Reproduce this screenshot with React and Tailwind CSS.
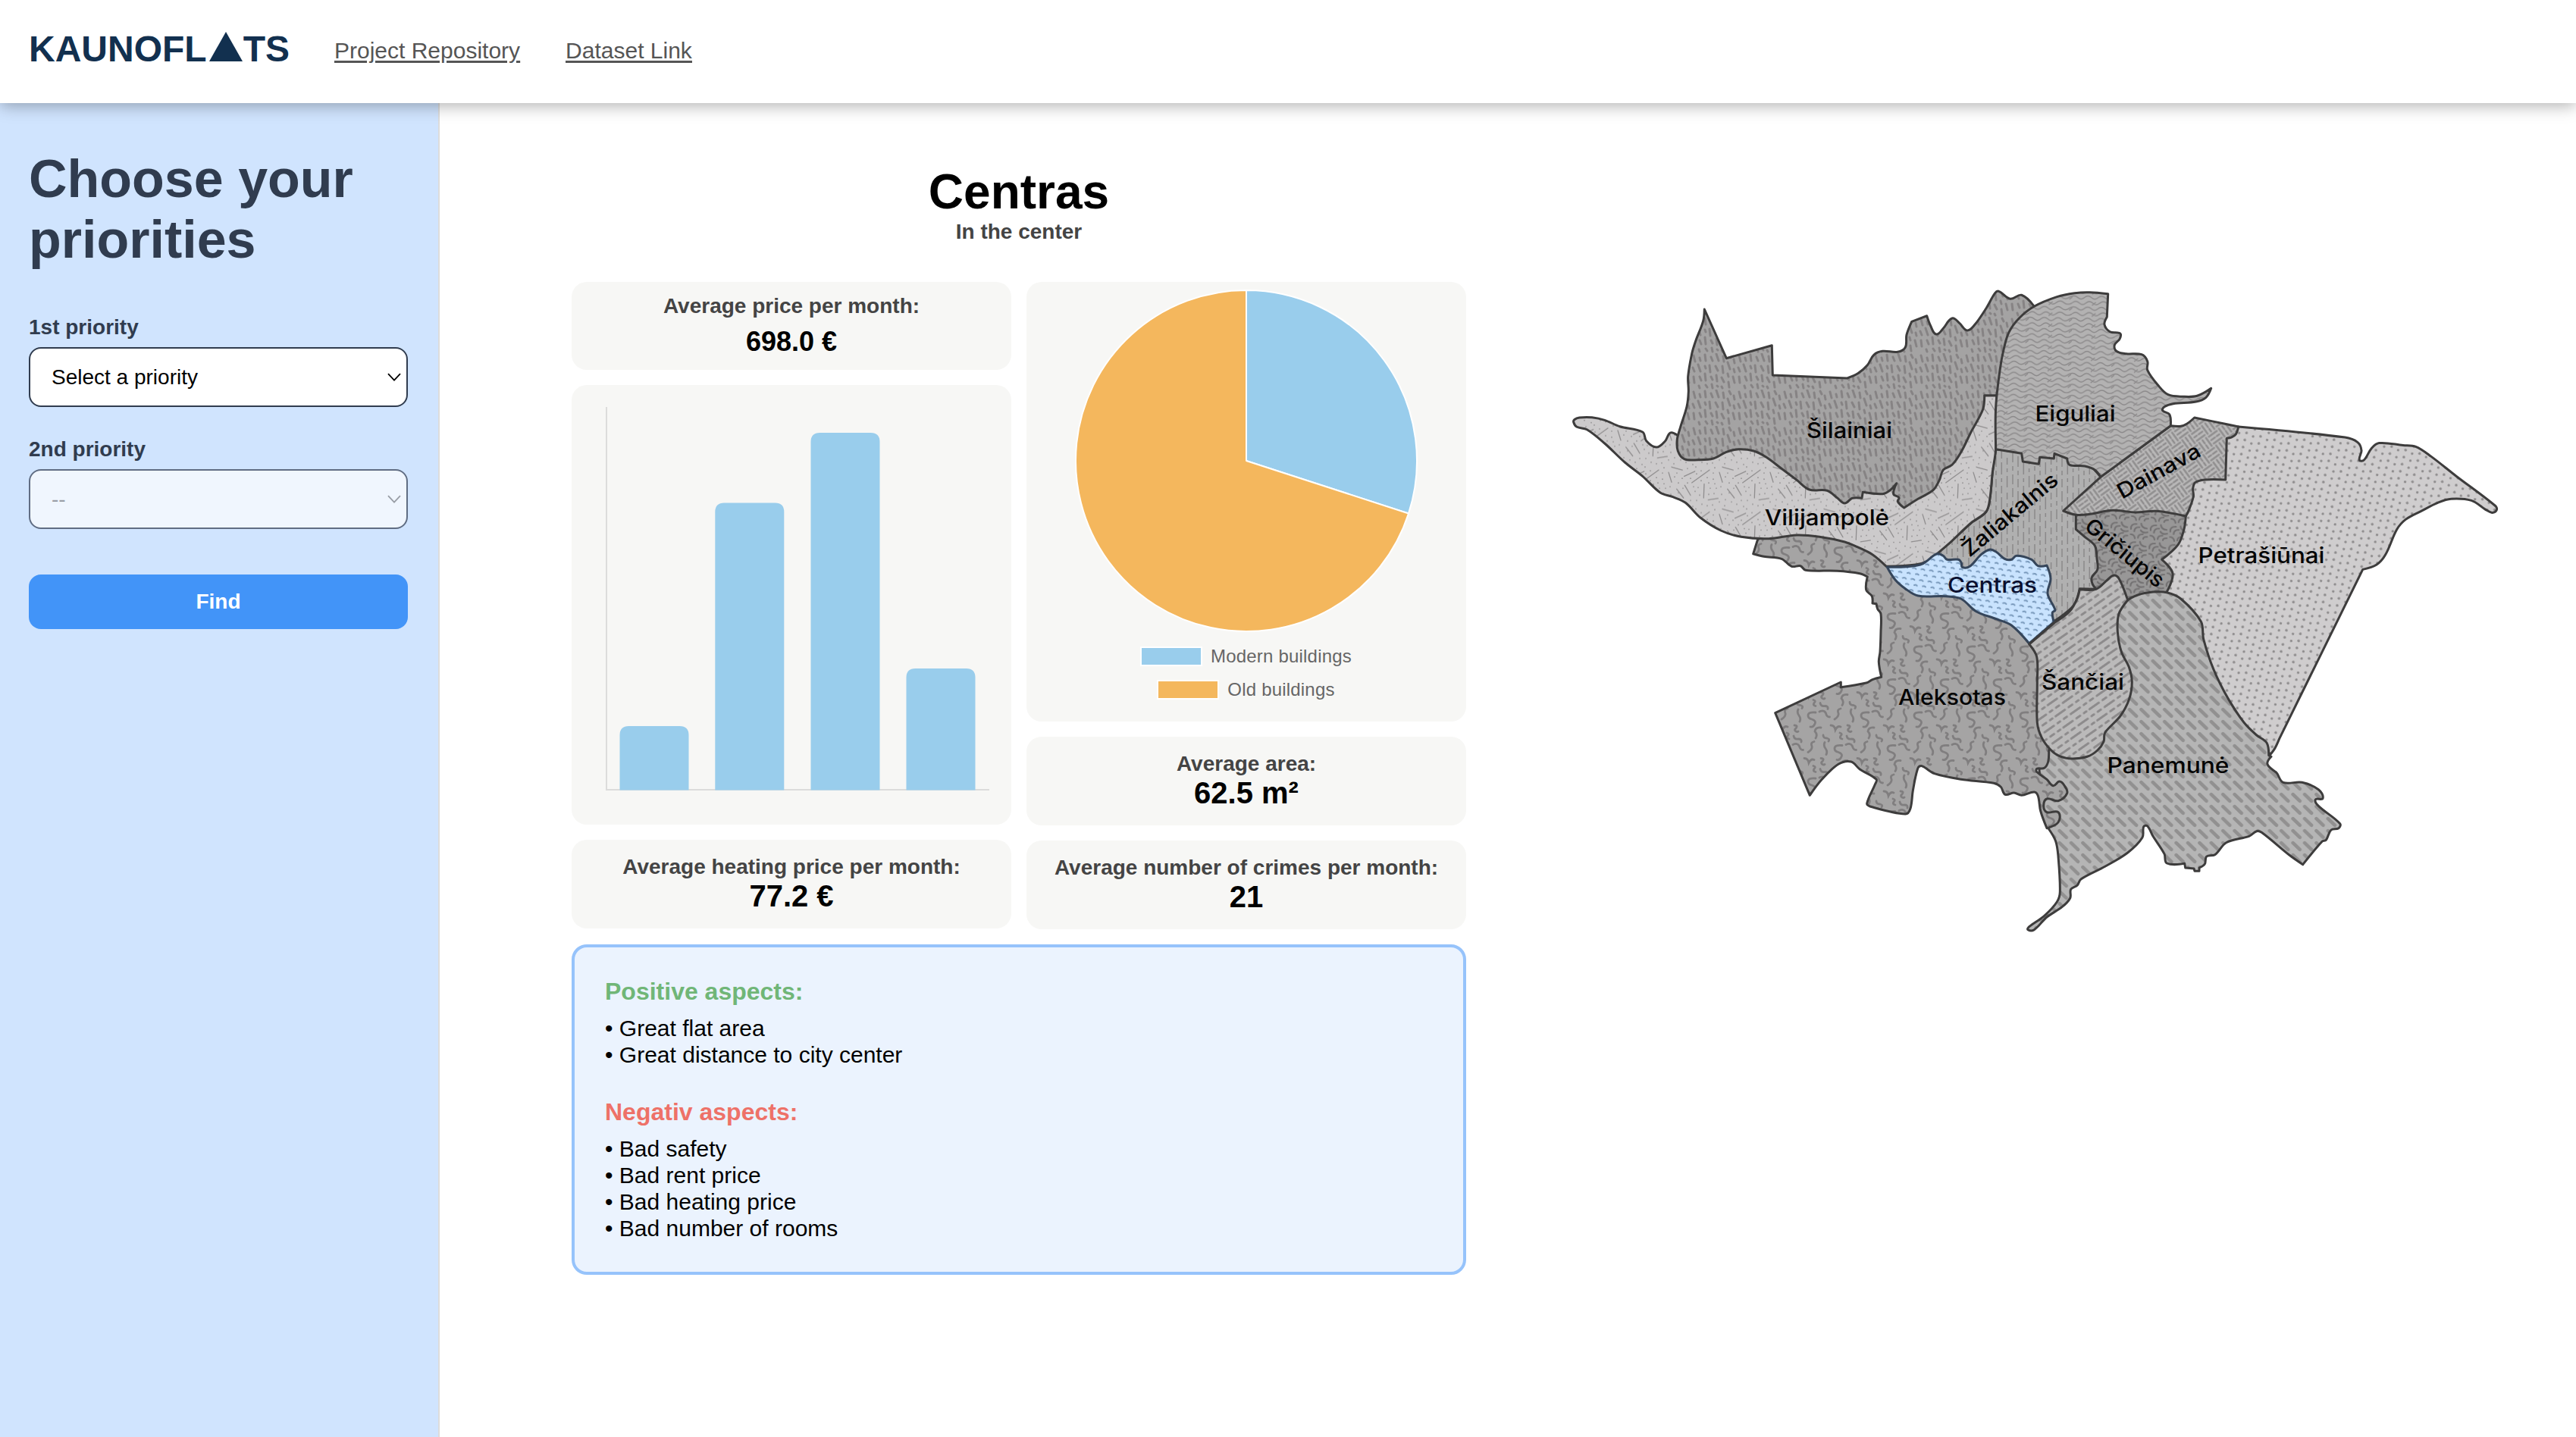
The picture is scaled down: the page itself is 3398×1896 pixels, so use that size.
import React from "react";

const ARIAL = "font-['Liberation_Sans',Arial,sans-serif]";

/* Turns "x,y x,y! ..." into a closed smooth path; "!" marks a sharp corner. */
function smooth(src) {
  const pts = src.trim().split(/\s+/).map((t) => {
    const corner = t.endsWith("!");
    const [x, y] = t.replace("!", "").split(",").map(Number);
    return { x, y, corner };
  });
  const n = pts.length;
  const tangent = (i) => {
    const p = pts[i];
    if (p.corner) return [0, 0];
    const a = pts[(i - 1 + n) % n];
    const b = pts[(i + 1) % n];
    const dx = b.x - a.x;
    const dy = b.y - a.y;
    const len = Math.hypot(dx, dy) || 1;
    return [dx / len, dy / len];
  };
  let d = `M${pts[0].x} ${pts[0].y}`;
  for (let i = 0; i < n; i++) {
    const p = pts[i];
    const q = pts[(i + 1) % n];
    const k = Math.hypot(q.x - p.x, q.y - p.y) / 3;
    const t1 = tangent(i);
    const t2 = tangent((i + 1) % n);
    d += `C${(p.x + t1[0] * k).toFixed(1)} ${(p.y + t1[1] * k).toFixed(1)} ${(q.x - t2[0] * k).toFixed(1)} ${(q.y - t2[1] * k).toFixed(1)} ${q.x} ${q.y}`;
  }
  return d + "Z";
}

const DISTRICTS = [
  {
    id: "petrasiunai",
    d: "902.7,193! 1043.3,207.1 1060,213.6 1065,224.3 1062.3,237 1068.3,237 1078.3,221.4 1088.3,214.6 1120,217.5 1136.7,219.3 1156.7,232.1 1190,258.2 1241.7,297.5 1243.3,302.9 1237.3,306.4 1228.3,302.1 1210,290.4 1183.3,288.2 1166.7,292.9 1143.3,304.6 1123.3,315.4 1111.7,328.6 1096.7,361.8 1085,375 1066.7,381.4! 956.7,604.6! 951,617 945,625.4! 920,600! 855,500! 800,420! 800,360! 825,300! 840,260! 875,200!",
  },
  {
    id: "zaliakalnis",
    d: "582.7,222.7! 578.3,253.3 575,286.7 570,305 550,320 523.3,345 506.7,359.3! 506,400! 630,460! 660,449.3! 673.3,440 686.7,426.7 693.3,406.7! 715,407.3! 735,380! 720,330! 700,300! 721,259.3! 700,235! 640,225!",
  },
  {
    id: "griciupis",
    d: "700,300! 688.3,309.3! 688.3,328.3! 700,338.3 713.3,350 716,366.7 716.7,381.7 709.3,391.7 710,400 715,407.3! 735,430! 790,430! 808.3,410.7! 816,386.7 801.7,368.3! 823.3,348.3 831,328 833.3,311! 820,300!",
  },
  {
    id: "panemune",
    d: "755,423.3 770,415 790,411 808.3,411.7 826.7,420 853.3,450 856.7,473.3 870,513.3 890,553.3 910,583.3 926.7,600 940,610 942.7,626.7! 946,628.3! 941,638.3 953.3,650 961.7,662.3 986.7,662.3 1008.3,671.7 1014,683.3 1004.3,685 1008.3,693.3 1036.7,716.7 1035,722.7 1025,725 1018.3,738.3 1013.3,740 987.7,770.7! 970,758.3 933.3,728.3 926.7,726.7 916.7,733.3 886.7,741.7 871.7,757.7 860.7,760 858.3,770 851,775! 851,779.3! 845,779.3! 844,776! 832.7,775! 831.7,769.3! 808.3,769 805,756.7 790,733.3 782.7,720 777.7,720.7 776,735 756.7,755 726.7,773.3 695,790 690,798.3 681.7,803.3 680.7,815 670,826.7 650,840 633.3,856.7 625,856.7 626.7,852.7 646.7,838.3 663.3,820 667.3,806.7 665,760 661.7,740 652,723! 644,700! 642,670! 640,646! 648,610! 670,560! 730,480! 744,440!",
  },
  {
    id: "dainava",
    d: "813.3,191.7! 826.7,192.3 835,189 844.7,181! 885,189.3 902.7,192.9! 899.3,202.9 893.3,207.1 887.3,208.2! 885.7,262.9! 858.3,262.9 846,266.4 842.7,274.3 843.3,285 836.7,304.6 833.3,311! 795,304.3 766.7,306 736.7,303.3 706.7,308.3 688.3,309.3 671.7,304! 721,259.3!",
  },
  {
    id: "aleksotas",
    d: "268.3,342.7! 262.7,360.7! 276.7,364.3 300,367.3 313.3,377.3 325,376.7 331.7,382.3 373.3,383.3 403.3,386.7 413.3,391! 411.7,408.3 419.3,416.7 420,426! 425,426.7! 426.7,433.3 431,440 431,463.3 430,490 428.3,503.3 431.7,523.3! 420,526.7 411.7,531 378.3,536.7! 378.3,530! 291.7,570.7! 337.3,679.3! 353.3,658.3 375,638.3 391.7,635 403.3,645 425,658.3 423.3,665 412.7,690 416.7,694 463.3,704 470,696.7 473.3,673.3 480,643.3 485,640.7 501.7,650.7 536.7,658.3 580,663.3 589.3,668.3 595,678.3 606.7,676 616.7,679.3 633.3,675 638.3,680 641.7,700 650,722.7! 665,715 665,701.7 650,701.7 645.7,693.3 650,684 665,686.7 676.7,676.7 673.3,666.7 666.7,661 658.3,666.7 650,658.3 636.7,648.3 636.7,644.3 646.7,643.3 651.7,635 652.7,620! 670,560! 660,490! 626.7,479! 603,450! 560,425! 480,405! 445,370! 400,340! 320,325! 275,335!",
  },
  {
    id: "vilijampole",
    d: "25.7,187 27,183.5 33.3,181 50,180.7 66.7,184.3 86.7,192.7 116.7,200 121.7,211.7 135,220 146.7,211.7 153.3,201 162.3,204! 200,210! 330,220! 480,260! 540,200! 566.7,151.7! 584,151.7! 582.7,222.7 578.3,253.3 575,286.7 570,305 550,320 523.3,345 506.7,359.3 493.3,370 476.7,375 438.3,377.3! 420,361.7 400,351.7 383.3,345 350,338.3 320,336 283.3,340.7 246.7,338.3 220,330 193.3,313.3 173.3,293.3 156.7,285.7 140,280 116.7,258.3 93.3,240 66.7,215 43.3,196.7 30,193.3",
  },
  {
    id: "silainiai",
    d: "198.3,38! 227.3,102.7! 287.3,85.7! 288.3,125! 386.7,129! 401,122.5 413.3,111.7 421.7,98.3 433.3,93.3 453.3,94.3 463.3,88.3 465,71.7 471.7,54.3! 491.7,46.7! 496.7,60 504,71 513.3,63.3 525,50 535,56.7 545,66 555,58.3 570,36.7 581.7,16.7 586.7,14.3 601.7,24.3 616.7,19.3 633.3,34.3! 615,70! 598,110! 584,151.7! 567.7,151.7! 565.7,170 550,200 536.7,226.7 525,243.3 513.3,250 508.3,263.3 500,276.7 480,288.3 461.7,300! 453.3,291.7 455,286.7 447.7,281.7 451.7,267.7! 443.3,276.7 433.3,281.7 407.3,279.3! 406,287.3! 393.3,287.3 383.3,294 373.3,286.7 360,277.3 336.7,276 320,263.3 300,248.3 280,233.3 263.3,225 243.3,222.7 226.7,226.7 210,235 190,236.7 171.7,235.7 163.3,225 162.3,210 166.7,193.3 175,166.7 177.3,146.7 176.7,126.7 181.7,96.7 186.7,80 196.7,53.3",
  },
  {
    id: "eiguliai",
    d: "582.7,222.7! 582.7,166.7 588.3,116.7 593.3,90 600,68.3 613.3,50 633.3,34.3 663.3,21.7 686.7,16.7 706.7,15.7 730.7,17.7! 729.3,48.3! 726,58.3 733.3,67.7 746.7,70 746,77.3 739.3,85 741.7,93.3 755,96.7 775,97.7 782.7,106.7 782.7,118.3 796.7,138.3 810,150.7 830,153.3 848.3,152.3 866.7,142.3! 860,154.3 846.7,160 816.7,162.7 805,166.7 802.7,171.7 811.7,176.7 813.3,191.7! 721,259.3! 713.3,250 700,245 680,243.3 676.7,235! 660,228.3! 659.3,235! 640.7,233.3! 639.3,242.3! 618.3,239! 616.7,228.3!",
  },
  {
    id: "centras",
    d: "439.3,378.3! 483.3,375 505,360.7 513.3,363.3 518.3,368.3 533.3,368.3 537.3,372.7 538.3,378.3 548.3,377.3 563.3,361.7 575,355 583.3,358.3 595,367.7 603.3,368.3 610,363.3 630,368.3 638.3,376.7 650,376! 655,393.3 651,413.3 661,435 657.3,438.3 659.3,450.7! 626.7,479! 603.3,455 583.3,446.7 556.7,436.7 536.7,420 516.7,416.7 480,416 463.3,406.7 450,395",
  },
  {
    id: "sanciai",
    d: "626.7,480! 636.7,496.7 637.3,530 637.3,583.3 643.3,603.3 655,619.3 666.7,627.7 683.3,631 703.3,628.3 716.7,620 725,608.3 726.7,596.7 746.7,575 758.3,553.3 762.3,530 758.3,510 748.3,490 743.3,463.3 745,440 756.7,421.7! 745,393.3 738.3,389 730,395 715,407.3 693.3,407.5! 690,420 680,436.7 660,451.5!",
  },
];

const LABELS = [
  { t: "Šilainiai", x: 333, y: 207.5, w: 113 },
  { t: "Vilijampolė", x: 278, y: 322.5, w: 164 },
  { t: "Eiguliai", x: 634.5, y: 185.5, w: 106 },
  { t: "Petrašiūnai", x: 849.5, y: 372.5, w: 167 },
  { t: "Aleksotas", x: 454, y: 559.5, w: 142 },
  { t: "Centras", x: 519, y: 411.5, w: 118, fill: "#0a0f2e" },
  { t: "Šančiai", x: 643, y: 539.5, w: 109 },
  { t: "Panemunė", x: 729.5, y: 649.5, w: 161 },
  { t: "Dainava", x: 749, y: 289, w: 121, r: -28.7 },
  { t: "Žaliakalnis", x: 548, y: 366, w: 155, r: -39.9 },
  { t: "Gričiupis", x: 698, y: 327, w: 126, r: 39.2 },
];

const SQUIGGLES =
  "M10 3q-10 -1 -10 4q0 4 5 5q6 2 4 6q-2 5 -6 4M15 2q6 -3 8.500 2q1 5 5 5M43 -2q-5 1 -3 6q1 4 -5 8M57 -1q-2 4 1 8q3 4 1 8M30 20q5 0 6 6q3 -6 7 -4M52 20q5 0 2 4q-3 2 0 4q2 1 3 0M17 23q-7 -1 -8 5q4 4 1 9M42 30q4 1 1 4q-2 3 2 4M51 34q1 5 6 4q5 0 4 4M20 33q0 4 5 4q4 1 2 4";

const SQUIGGLE_ORIGINS = [
  [0, 0],
  [70, 0],
  [0, -87],
  [0, 87],
  [35, 43.5],
  [-35, 43.5],
  [35, -43.5],
  [-35, -43.5],
];

function Patterns() {
  return (
    <defs>
      <pattern id="petrasiunai" width="19" height="9.6" patternUnits="userSpaceOnUse" patternTransform="rotate(14)">
        <rect width="19" height="9.6" fill="#cfcdce" />
        <g fill="#8e8c8d">
          <circle cx="4" cy="3" r="1.7" />
          <circle cx="13.5" cy="5.6" r="1.7" />
        </g>
      </pattern>
      <pattern id="zaliakalnis" width="29" height="46" patternUnits="userSpaceOnUse">
        <rect width="29" height="46" fill="#b0b0b0" />
        <path d="M3 2v14M3 21v6M3 32v11M10.3 0v5M10.3 10v16M10.3 31v5M10.3 41v5M17.6 4v9M17.6 18v5M17.6 28v15M25 0v10M25 15v6M25 26v13M25 44v2" stroke="#8b898a" strokeWidth="1.5" />
      </pattern>
      <pattern id="griciupis" width="26" height="24" patternUnits="userSpaceOnUse" patternTransform="rotate(4)">
        <rect width="26" height="24" fill="#989797" />
        <path d="M2 10q-1 -7 7 -7M6.500 13q0 -6 6.500 -6M15 2q1 6 8 6M15 11q3 4 9 2M2 17q5 0 6 5M12 21q0 -5 6 -5M19 22q0 -3 5 -3" stroke="#737172" strokeWidth="2.2" fill="none" strokeLinecap="round" />
      </pattern>
      <pattern id="panemune" width="15.4" height="32" patternUnits="userSpaceOnUse" patternTransform="translate(2 3)">
        <rect width="15.4" height="32" fill="#b5b5b5" />
        <path d="M2.500 3.200l9 8.600M2.500 19.200l9 8.600" stroke="#919090" strokeWidth="4.6" strokeLinecap="round" />
      </pattern>
      <pattern id="dainava" width="32" height="32" patternUnits="userSpaceOnUse" patternTransform="rotate(-36)">
        <rect width="32" height="32" fill="#b9b8b8" />
        <path d="M1.5 2.5h13M1.5 8h6M10.5 8h4M1.5 13.5h13M17.5 18.5h13M17.5 24h4M24.5 24h6M17.5 29.5h13M18.5 1.5v13M24 1.5v5M24 9.5v5M29.5 1.5v13M2.5 17.5v13M8 17.5v6M8 26.5v4M13.5 17.5v13" stroke="#8f8d8e" strokeWidth="2.5" strokeLinecap="round" />
      </pattern>
      <pattern id="aleksotas" width="70" height="87" patternUnits="userSpaceOnUse" patternTransform="translate(55 45)">
        <rect width="70" height="87" fill="#a5a4a4" />
        <g stroke="#807e7f" strokeWidth="2.8" fill="none" strokeLinecap="round">
          {SQUIGGLE_ORIGINS.map(([x, y]) => (
            <path key={`${x},${y}`} d={SQUIGGLES} transform={`translate(${x} ${y})`} />
          ))}
        </g>
      </pattern>
      <pattern id="vilijampole" width="67" height="55.3" patternUnits="userSpaceOnUse" patternTransform="translate(16 24)">
        <rect width="67" height="55.3" fill="#cccacb" />
        <path d="M31.7 21.7L55 5M5 1l14.3 4M21.7 13.3l14 -6.6M1 8l4 13M11.7 30l9 11.7M22.3 25l7.7 13.3M48 23.3l-.7 18.4M53.3 44.3l13 -2" stroke="#8f8d8e" strokeWidth="1.3" strokeLinecap="round" />
        <path d="M3 27h0M9 14h0M14 22h0M12 9h0M19 16h0M26 3h0M30 16h0M26 22h0M37 1h0M38 10h0M44 6h0M44 19h0M40 28h0M36 33h0M42 38h0M38 45h0M30 45h0M24 50h0M17 47h0M9 44h0M4 37h0M14 35h0M8 52h0M45 50h0M52 52h0M59 51h0M54 37h0M61 36h0M56 29h0M64 29h0M54 22h0M60 17h0M62 23h0M60 9h0M62 2h0M52 15h0M1 47h0M33 53h0M34 27h0M20 29h0" stroke="#959394" strokeWidth="1.8" strokeLinecap="round" />
      </pattern>
      <pattern id="silainiai" width="60" height="48" patternUnits="userSpaceOnUse">
        <rect width="60" height="48" fill="#a4a3a3" />
        <path d="M4 3l2 8M12 6l1 4M19 2l1 8M27 5l2 5M34 1l3 9M43 4l1 7M51 2l2 4M57 8l1 5M3 19l2 5M10 15l3 9M19 17l1 3M25 16l1 9M33 17l3 6M42 17l1 9M49 12l3 9M57 21l1 4M4 31l1 8M12 31l2 5M19 27l1 9M27 31l2 4M34 29l1 8M41 32l3 6M49 27l1 4M56 31l2 8M11 43l1 3M20 42l2 3M28 41l1 5M41 44l1 2M50 38l1 7M35 43l1 1" stroke="#868384" strokeWidth="3" strokeLinecap="round" />
      </pattern>
      <pattern id="eiguliai" width="57" height="14.6" patternUnits="userSpaceOnUse" patternTransform="rotate(1)">
        <rect width="57" height="14.6" fill="#b3b2b2" />
        <path d="M0 3q4.5 -4 9 0t9 0q4.5 -4 9 0t9 0q5 -4 10 0t11 0M-3 10.3q5 -4 10 0t9 0q4.5 -4 9 0t9 0q4.5 -4 9 0t10 0q4 -3 7 0M26 6l5 -4M53 13l5 -4" stroke="#8b898a" strokeWidth="1.4" fill="none" />
      </pattern>
      <pattern id="centras" width="11.3" height="14.6" patternUnits="userSpaceOnUse" patternTransform="rotate(8)">
        <rect width="11.3" height="14.6" fill="#c9e3fe" />
        <path d="M1.500 3.500q2.500 -1.500 4.500 .5M6.600 10.800q2 -1.500 3.700 .4" stroke="#7898ba" strokeWidth="1.9" fill="none" strokeLinecap="round" />
      </pattern>
      <pattern id="sanciai" width="42" height="18" patternUnits="userSpaceOnUse" patternTransform="rotate(-35)">
        <rect width="42" height="18" fill="#bbbaba" />
        <path d="M2 4.500h15M23 4.500h6M35 4.500h4M9 13.500h5M20 13.500h15" stroke="#8d8b8c" strokeWidth="3" strokeLinecap="round" />
        <path d="M0 13.500h3M41 13.500h1" stroke="#8d8b8c" strokeWidth="3" strokeLinecap="round" />
      </pattern>
    </defs>
  );
}

function DistrictMap() {
  return (
    <svg width="1270" height="880" viewBox="0 0 1270 880" className="block">
      <Patterns />
      {DISTRICTS.map((z) => (
        <path key={z.id} d={smooth(z.d)} fill={`url(#${z.id})`} stroke={z.id === "centras" ? "#35455a" : "#3d3c3c"} strokeWidth="3" strokeLinejoin="round" />
      ))}
      {LABELS.map((l) => (
        <text
          key={l.t}
          x={l.x}
          y={l.y}
          textLength={l.w}
          lengthAdjust="spacingAndGlyphs"
          fill={l.fill || "#050505"}
          className="font-['Inter',sans-serif] text-[28px] font-medium"
          transform={l.r ? `rotate(${l.r} ${l.x} ${l.y})` : undefined}
        >
          {l.t}
        </text>
      ))}
    </svg>
  );
}

function Header() {
  return (
    <header className="relative z-10 flex h-[136px] items-start bg-white pl-[38px] shadow-[0_4px_20px_rgba(0,0,0,0.3)]">
      <div className="mt-[37px] flex text-[48px] leading-[56px] font-bold text-[#12304f]">
        <span>KAUNOFL</span>
        <svg width="44" height="39" viewBox="0 0 44 39" className="mt-[5px] mr-[1px] ml-[3px]">
          <path d="M22 0L44 39H0Z" fill="#12304f" />
        </svg>
        <span>TS</span>
      </div>
      <nav className="mt-[50px] ml-[59px] flex gap-[60px] text-[30px] leading-[34px] text-[#555] underline decoration-[2.5px] underline-offset-[3px]">
        <a>Project Repository</a>
        <a>Dataset Link</a>
      </nav>
    </header>
  );
}

function Chevron({ color }) {
  return (
    <svg width="18" height="11" viewBox="0 0 18 11" fill="none">
      <path d="M1 1.2L9 9.6L17 1.2" stroke={color} strokeWidth="1.8" />
    </svg>
  );
}

function Sidebar() {
  return (
    <aside className="flex w-[580px] shrink-0 flex-col border-r-2 border-[#dcdcdc] bg-[#d0e4fe] pt-[60px] pr-[40px] pl-[38px] text-[#303c4f]">
      <h1 className="text-[70px] leading-[80px] font-bold">Choose your priorities</h1>
      <label className="mt-[60px] text-[28px] leading-[32px] font-bold">1st priority</label>
      <div className="mt-[10px] flex h-[79px] items-center justify-between rounded-[16px] border-2 border-[#303c4f] bg-white pr-[7px] pl-[28px] text-[28px] leading-[32px] text-black">
        <span>Select a priority</span>
        <Chevron color="#000" />
      </div>
      <label className="mt-[40px] text-[28px] leading-[32px] font-bold">2nd priority</label>
      <div className="mt-[10px] flex h-[79px] items-center justify-between rounded-[16px] border-2 border-[#606d83] bg-[#f0f6fe] pr-[7px] pl-[28px] text-[28px] leading-[32px] text-[#999ea6]">
        <span>--</span>
        <Chevron color="#999ea6" />
      </div>
      <button className="mt-[60px] h-[72px] rounded-[16px] bg-[#4294f8] text-[28px] leading-[32px] font-bold text-white">Find</button>
    </aside>
  );
}

function Stat({ label, value }) {
  return (
    <div className="flex h-[117px] flex-col items-center rounded-[20px] bg-[#f7f7f5] pt-[20px] font-bold">
      <span className="text-[28px] leading-[32px] text-[#444]">{label}</span>
      <span className="-mt-px text-[40px] leading-[46px] text-black">{value}</span>
    </div>
  );
}

const BARS = [
  { x: 63.5, y: 450 },
  { x: 189.3, y: 155.5 },
  { x: 315.5, y: 63 },
  { x: 441.5, y: 374 },
];

function BarChart() {
  return (
    <div className="h-[580px] rounded-[20px] bg-[#f7f7f5]">
      <svg width="580" height="580" viewBox="0 0 580 580">
        <path d="M46 29V535M45 534H551" stroke="#dcdcdb" strokeWidth="2" />
        {BARS.map((b) => (
          <path key={b.x} d={`M${b.x} 534.5V${b.y + 12}q0 -12 12 -12h67q12 0 12 12V534.5Z`} fill="#99cdec" />
        ))}
      </svg>
    </div>
  );
}

function PieChart() {
  return (
    <div className="flex h-[580px] flex-col items-center rounded-[20px] bg-[#f7f7f5] pt-[9px]">
      <svg width="454" height="454" viewBox="-227 -227 454 454" stroke="#fff" strokeWidth="2" strokeLinejoin="bevel">
        <path d="M0 0V-225A225 225 0 0 1 214 69.5Z" fill="#99cdec" />
        <path d="M0 0L214 69.5A225 225 0 1 1 0 -225Z" fill="#f4b75d" />
      </svg>
      <div className="mt-[18px] flex h-[26px] items-center text-[24px] leading-[26px] tracking-[0.2px] text-[#666]">
        <span className="mr-[11px] -ml-px h-[26px] w-[82px] border-2 border-white bg-[#99cdec]" />
        Modern buildings
      </div>
      <div className="mt-[18px] flex h-[26px] items-center text-[24px] leading-[26px] tracking-[0.2px] text-[#666]">
        <span className="mr-[11px] -ml-px h-[26px] w-[82px] border-2 border-white bg-[#f4b75d]" />
        Old buildings
      </div>
    </div>
  );
}

function List({ items }) {
  return (
    <ul className="mt-[12px] text-[30px] leading-[35px] text-black">
      {items.map((i) => (
        <li key={i}>• {i}</li>
      ))}
    </ul>
  );
}

export default function App() {
  return (
    <div className={`flex h-[1896px] w-[3398px] flex-col overflow-hidden bg-white ${ARIAL}`}>
      <Header />
      <div className="flex flex-1">
        <Sidebar />
        <main className="flex flex-1 pl-[174px]">
          <section className="w-[1180px] pt-[81px]">
            <h2 className="text-center text-[64px] leading-[72px] font-bold text-black">Centras</h2>
            <p className="mt-[2px] text-center text-[28px] leading-[30px] font-bold text-[#444]">In the center</p>
            <div className="mt-[51px] grid grid-cols-2 gap-[20px]">
              <div className="flex flex-col gap-[20px]">
                <div className="flex h-[116px] flex-col items-center rounded-[20px] bg-[#f7f7f5] pt-[16px] font-bold">
                  <span className="text-[28px] leading-[32px] text-[#444]">Average price per month:</span>
                  <span className="mt-[11px] text-[36px] leading-[40px] text-black">698.0 €</span>
                </div>
                <BarChart />
                <Stat label="Average heating price per month:" value="77.2 €" />
              </div>
              <div className="flex flex-col gap-[20px]">
                <PieChart />
                <Stat label="Average area:" value="62.5 m²" />
                <Stat label="Average number of crimes per month:" value="21" />
              </div>
            </div>
            <div className="mt-[20px] h-[436px] rounded-[20px] border-4 border-[#96c3fb] bg-[#ebf3fe] px-[40px] pt-[40px]">
              <h3 className="text-[32px] leading-[37px] font-bold text-[#70b677]">Positive aspects:</h3>
              <List items={["Great flat area", "Great distance to city center"]} />
              <h3 className="mt-[40px] text-[32px] leading-[37px] font-bold text-[#ee7168]">Negativ aspects:</h3>
              <List items={["Bad safety", "Bad rent price", "Bad heating price", "Bad number of rooms"]} />
            </div>
          </section>
          <section className="mt-[234px] ml-[116px]">
            <DistrictMap />
          </section>
        </main>
      </div>
    </div>
  );
}
